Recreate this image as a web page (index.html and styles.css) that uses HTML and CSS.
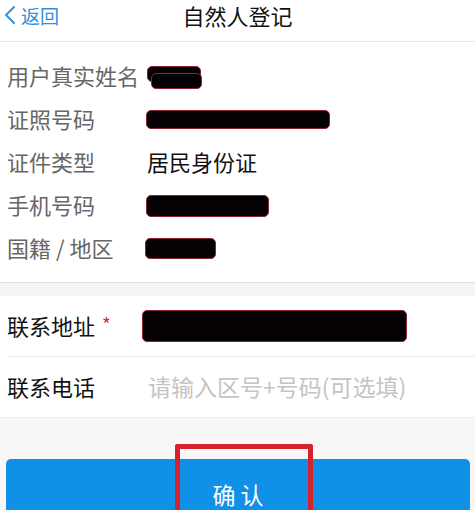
FILE: index.html
```html
<!DOCTYPE html>
<html lang="zh">
<head>
<meta charset="utf-8">
<link rel="stylesheet" href="styles.css">
</head>
<body>
<div class="page">
  <header class="nav">
    <div class="back">
      <svg class="chev" width="14" height="20" viewBox="0 0 14 20"><path d="M11 2 L3 10 L11 18" fill="none" stroke="#2f8fe0" stroke-width="1.9" stroke-linecap="round" stroke-linejoin="round"/></svg>
      <span>返回</span>
    </div>
    <div class="title">自然人登记</div>
  </header>

  <section class="info">
    <div class="row"><span class="label">用户真实姓名</span><span class="redact r1"><span class="redact-under"></span></span></div>
    <div class="row"><span class="label">证照号码</span><span class="redact r2"></span></div>
    <div class="row"><span class="label">证件类型</span><span class="value">居民身份证</span></div>
    <div class="row"><span class="label">手机号码</span><span class="redact r4"></span></div>
    <div class="row"><span class="label">国籍 / 地区</span><span class="redact r5"></span></div>
  </section>

  <div class="gap"></div>

  <section class="contact">
    <div class="crow first"><span class="clabel">联系地址<span class="star">*</span></span><span class="redact r6"></span></div>
    <div class="crow"><span class="clabel">联系电话</span><span class="placeholder">请输入区号+号码(可选填)</span></div>
  </section>

  <div class="footer">
    <button class="confirm">确 认</button>
    <div class="mark"></div>
  </div>
</div>
</body>
</html>
```

FILE: styles.css
```css
html, body { margin: 0; padding: 0; }
body {
  font-family: "Noto Sans CJK SC", "Noto Sans", sans-serif;
  background: #f7f7f7;
  width: 475px;
  height: 510px;
  overflow: hidden;
}
.page { position: relative; width: 475px; height: 510px; }
.nav {
  height: 41px;
  background: #fff;
  border-bottom: 1px solid #e6e6e6;
  position: relative;
  display: flex;
  align-items: center;
  justify-content: center;
}
.back {
  position: absolute;
  left: 3px;
  top: 0;
  height: 30px;
  display: flex;
  align-items: center;
  gap: 4px;
  color: #2f8fe0;
  font-size: 19px;
}
.title {
  font-size: 22px;
  color: #111;
  margin-top: -12px;
}
.info {
  background: #fff;
  padding: 13px 0 12px;
}
.row {
  height: 43px;
  display: flex;
  align-items: center;
  padding-left: 7px;
}
.label {
  width: 140px;
  font-size: 22px;
  color: #666;
  line-height: 1;
  padding-bottom: 4px;
}
.value {
  font-size: 22px;
  color: #111;
  line-height: 1;
  padding-bottom: 4px;
}
.redact {
  display: block;
  background: #050003;
  border: 1px solid #8a2430;
  border-radius: 5px;
  box-sizing: border-box;
  position: relative;
}
.r1 { width: 54px; height: 16px; margin-top: -6px; }
.redact-under {
  position: absolute;
  left: 3px; top: 6px;
  width: 49px; height: 14px;
  background: #050003;
  border: 1px solid #8a2430;
  border-radius: 5px;
}
.r2 { width: 184px; height: 19px; margin-left: -1px; }
.r4 { width: 123px; height: 22px; margin-left: -1px; }
.r5 { width: 71px; height: 21px; margin-left: -2px; }
.gap {
  height: 13px;
  background: #f5f5f7;
  border-top: 1px solid #dedede;
}
.contact {
  background: #fff;
  border-bottom: 1px solid #ececec;
}
.crow {
  height: 60px;
  display: flex;
  align-items: center;
  margin-left: 8px;
}
.crow.first {
  border-bottom: 1px solid #ececec;
}
.clabel {
  width: 135px;
  font-size: 22px;
  color: #111;
  line-height: 1;
  margin-left: -1px;
  padding-bottom: 2px;
}
.star {
  color: #e0303a;
  font-size: 19px;
  margin-left: 7px;
  vertical-align: top;
}
.r6 { width: 265px; height: 32px; }
.placeholder {
  font-size: 23px;
  color: #c4c4c4;
  line-height: 1;
  margin-left: 6px;
  padding-bottom: 2px;
}
.footer {
  padding: 41px 5px 0 6px;
  position: relative;
}
.confirm {
  display: block;
  width: 464px;
  height: 70px;
  border: none;
  border-radius: 5px;
  background: #1190e8;
  color: #fff;
  font-family: "Noto Sans CJK SC", sans-serif;
  font-size: 23px;
  padding: 0;
  margin: 0;
}
.mark {
  position: absolute;
  left: 175px;
  top: 26px;
  width: 138px;
  height: 90px;
  border: 5px solid #d5212b;
  border-radius: 2px;
  box-sizing: border-box;
}
```
